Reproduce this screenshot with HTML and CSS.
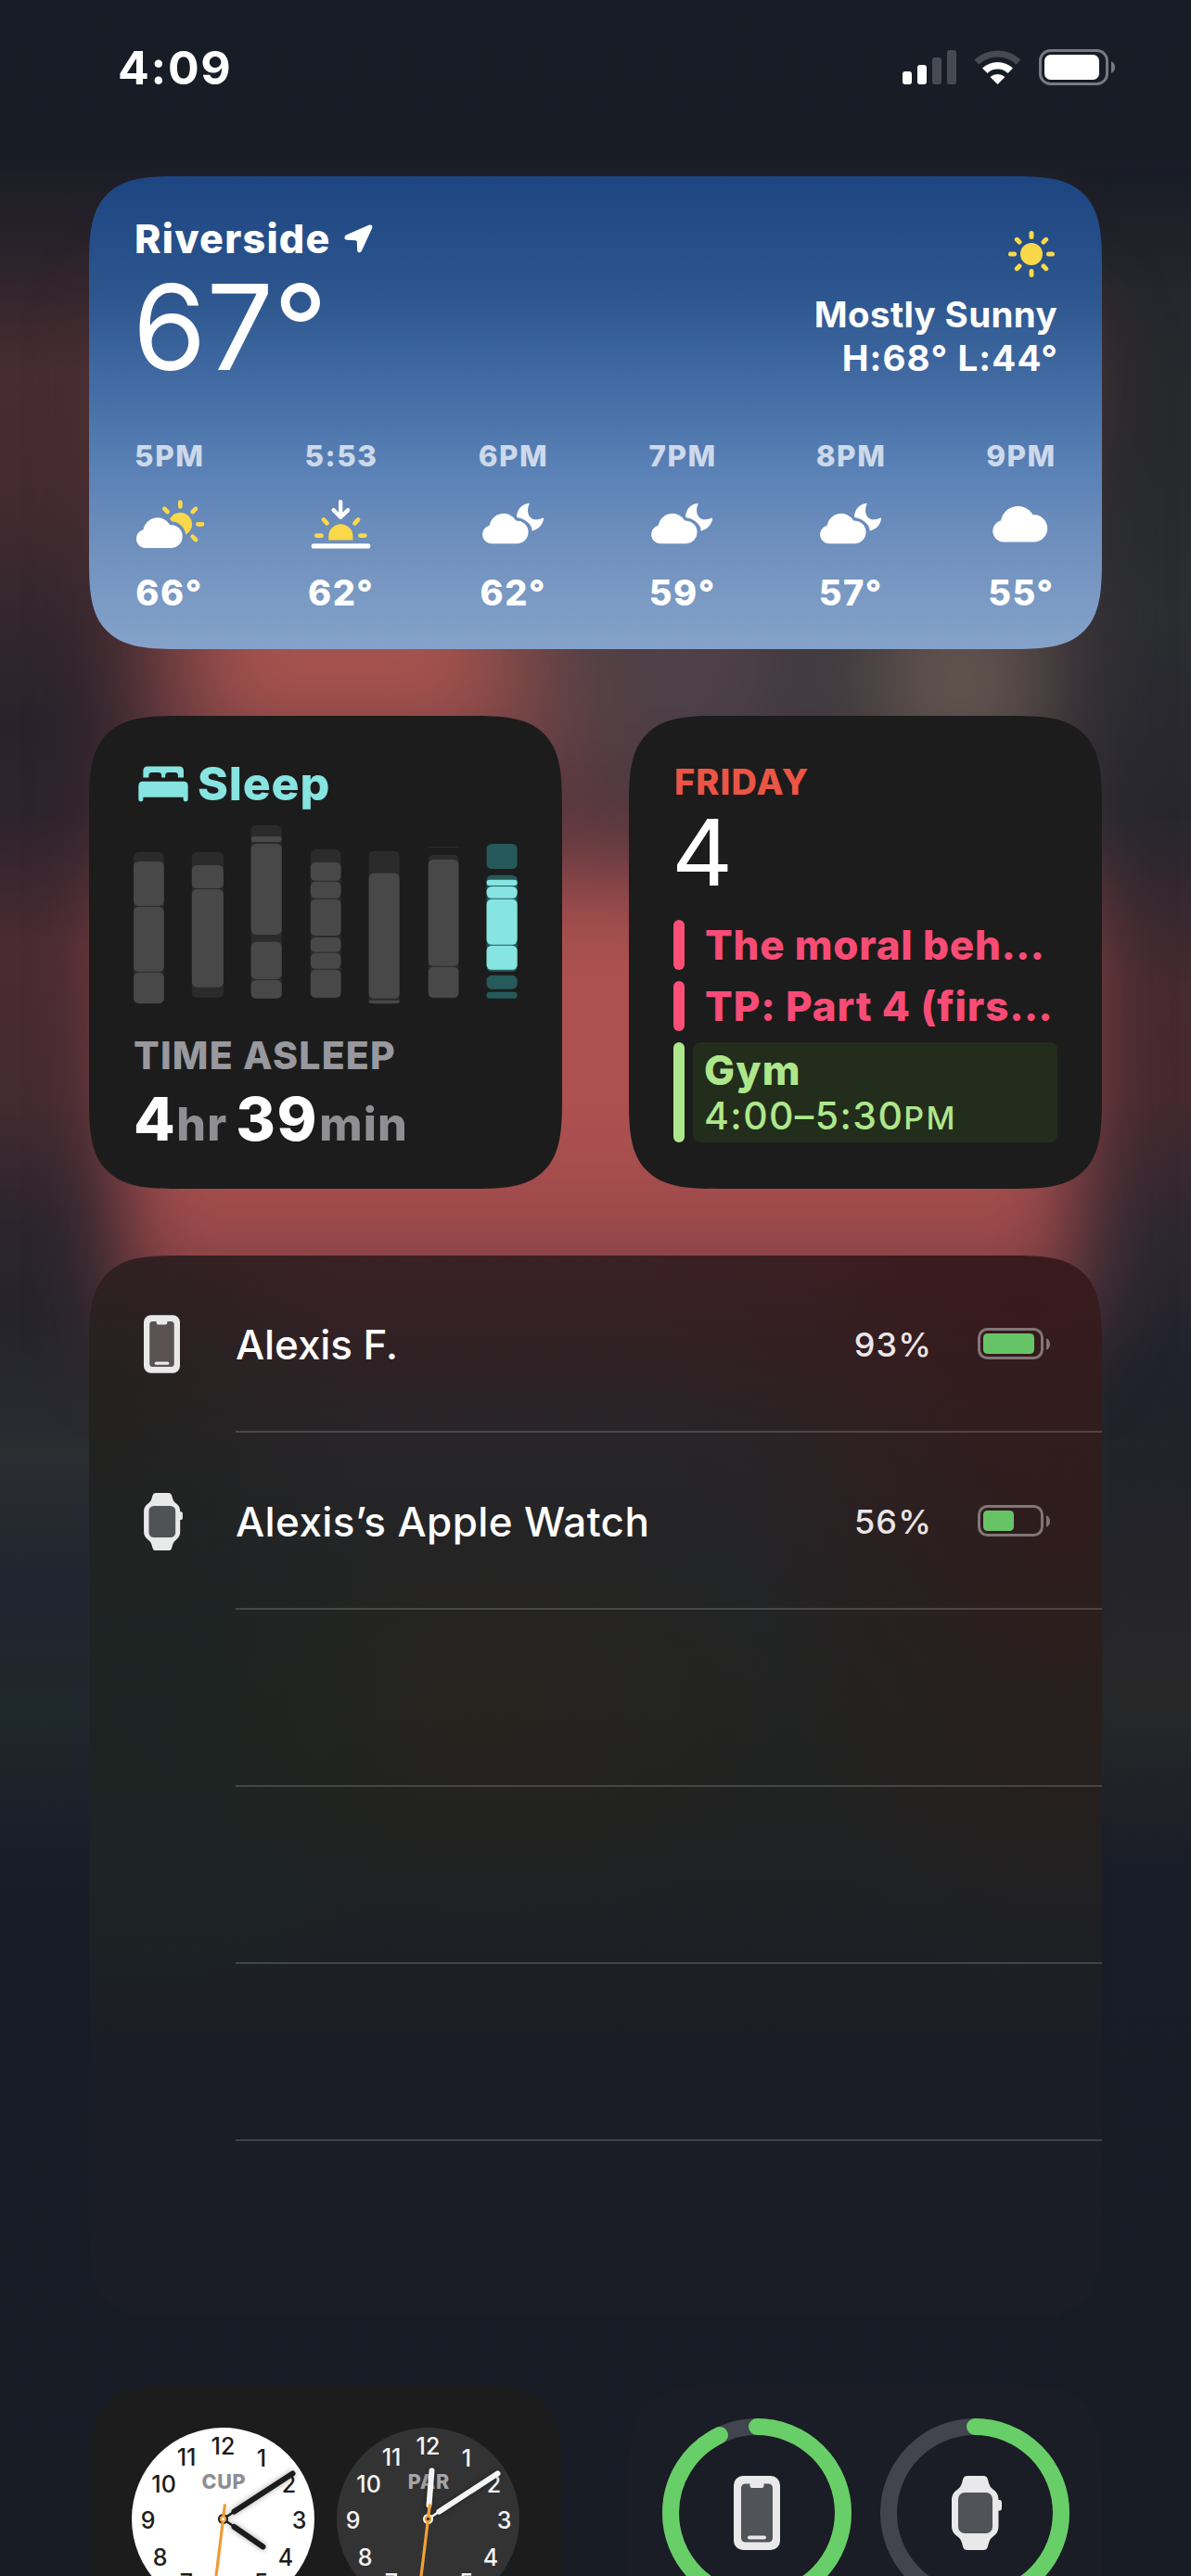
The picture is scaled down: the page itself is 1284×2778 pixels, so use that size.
FILE: index.html
```html
<!DOCTYPE html>
<html lang="en">
<head>
<meta charset="utf-8">
<meta name="viewport" content="width=device-width">
<title>Today View</title>
<link rel="stylesheet" href="styles.css">
</head>
<body>
<svg class="defs" width="0" height="0" aria-hidden="true">
  <defs>
    <path id="cloud" d="M51 390 A30 30 0 0 1 45 331 A47 47 0 0 1 132 315 A37.500 37.500 0 1 1 137 390 Z"/>
    <mask id="cloud-gap" maskUnits="userSpaceOnUse" x="0" y="220" width="260" height="190">
      <rect x="0" y="220" width="260" height="190" fill="#fff"/>
      <use href="#cloud" fill="#000" stroke="#000" stroke-width="22"/>
    </mask>
    <symbol id="partly-sunny" viewBox="20 232 225 160">
      <circle cx="165" cy="313" r="38" fill="#f9d84a" mask="url(#cloud-gap)"/>
      <g stroke="#f9d84a" stroke-width="14" stroke-linecap="round">
        <path d="M165 242V256M114 263L124 273M215 263L205 273M222 313H236M205 353L215 363"/>
      </g>
      <use href="#cloud" fill="#fff"/>
    </symbol>
    <symbol id="sunset" viewBox="586 232 196 162">
      <path d="M683 241V290M660 268L683 291L707 268" fill="none" stroke="#fff" stroke-width="13" stroke-linecap="round" stroke-linejoin="round"/>
      <path d="M644 366V353A39.500 39.500 0 0 1 723 353V366Z" fill="#f9d84a"/>
      <path d="M605 351H621M747 351H762M628 299L639 311M740 299L729 311" stroke="#f9d84a" stroke-width="14" stroke-linecap="round"/>
      <path d="M596 385H772" stroke="#fff" stroke-width="16" stroke-linecap="round"/>
    </symbol>
    <symbol id="cloud-moon" viewBox="1142 244 204 136">
      <use href="#cloud" x="1122" y="-12" fill="#fff"/>
      <path d="M1296 246C1275 248 1260 262 1256 287C1256 290 1257 292 1260 293C1275 296 1282 300 1290 307C1300 315 1306 324 1306 333C1306 336 1308 337 1311 335C1328 330 1340 318 1344 298C1345 294 1342 293 1339 295C1322 301 1308 300 1301 292C1290 280 1291 262 1297 249C1298 247 1298 246 1296 246Z" fill="#fff"/>
    </symbol>
    <symbol id="cloud-only" viewBox="20 287 156 104"><use href="#cloud" fill="#fff"/></symbol>
    <symbol id="phone" viewBox="0 0 50 80">
      <rect width="50" height="80" rx="10" fill="#e9e9e9"/>
      <rect x="8" y="8.500" width="34" height="63" rx="4.500" fill="currentColor"/>
      <path d="M17.500 7.500H32.500V10.500A2.500 2.500 0 0 1 30 13H20A2.500 2.500 0 0 1 17.500 10.500Z" fill="#e9e9e9"/>
      <rect x="15" y="64.500" width="20" height="4" rx="2" fill="#e9e9e9"/>
    </symbol>
    <symbol id="watch" viewBox="0 0 54 80">
      <path d="M17 0H34C37 0 38 1 39 4C40 8 41 12 44 14C48 17 50.500 20 50.500 26H52C53.500 26 54 27.500 54 29V34C54 36 53.500 37.500 52 37.500H50.500V54C50.500 60 48 63 44 66C41 68 40 72 39 76C38 79 37 80 34 80H17C14 80 13 79 12 76C11 72 10 68 7 66C3 63 0 60 0 54V26C0 20 3 17 7 14C10 12 11 8 12 4C13 1 14 0 17 0Z" fill="#e9e9e9"/>
      <rect x="7" y="18" width="37" height="44" rx="7" fill="currentColor"/>
    </symbol>
    <symbol id="dial" viewBox="-100 -100 200 200">
      <g font-family="Inter, sans-serif" font-size="25" font-weight="500" text-anchor="middle">
        <text x="0" y="-70">12</text><text x="41.500" y="-57">1</text><text x="71" y="-29">2</text>
        <text x="82" y="10">3</text><text x="67.500" y="50">4</text><text x="41" y="77">5</text>
        <text x="0" y="90">6</text><text x="-39.500" y="77">7</text><text x="-68" y="50">8</text>
        <text x="-81" y="10">9</text><text x="-64" y="-29">10</text><text x="-39.500" y="-58">11</text>
      </g>
    </symbol>
  </defs>
</svg>

<main class="screen">
  <header class="status">
    <time class="status-time">4:09</time>
    <svg class="status-icons" viewBox="0 0 147 40" width="147" height="40">
      <g fill="#fff"><rect x="0" y="24" width="10" height="14" rx="3"/><rect x="16" y="17" width="10" height="21" rx="3"/></g>
      <g fill="#474a53"><rect x="32" y="9" width="10" height="29" rx="3"/><rect x="48" y="1" width="10" height="37" rx="3"/></g>
      <path d="M77.500 11.500A36 36 0 0 1 127.500 11.500L122.500 16.500A29 29 0 0 0 82.500 16.500Z" fill="#474a53"/>
      <path d="M86 20.500A24 24 0 0 1 119 20.500L113.500 26A16 16 0 0 0 91.500 26Z" fill="#fff"/>
      <path d="M94.500 30A12 12 0 0 1 110.500 30L102.500 38Z" fill="#fff"/>
    </svg>
    <svg class="status-battery" viewBox="0 0 83 40" width="83" height="40">
      <rect x="1.500" y="1.500" width="72" height="36" rx="11" fill="none" stroke="#777a80" stroke-width="3"/>
      <rect x="6" y="6" width="59" height="27" rx="6.500" fill="#fff"/>
      <path d="M78 13Q82 15 82 19.500T78 26Z" fill="#777a80"/>
    </svg>
  </header>

  <section class="card weather">
    <div class="weather-now">
      <div>
        <div class="place">Riverside
          <svg viewBox="725 66 92 92" width="31" height="31"><path d="M804 68L734 99C724 104 723 115 734 116L761 117Q766 117 766 122L767 149C768 159 778 158 782 149L814 79C818 70 812 65 804 68Z" fill="#fff"/></svg>
        </div>
        <div class="temp">67°</div>
      </div>
      <div class="summary">
        <svg viewBox="-25 -25 50 50" width="50" height="50">
          <circle r="12" fill="#f9d84a"/>
          <path d="M0-22.500V-18.500M0 18.500V22.500M-22.500 0H-18.500M18.500 0H22.500M-15.700-15.700L-13-13M15.700-15.700L13-13M-15.700 15.700L-13 13M15.700 15.700L13 13" stroke="#f9d84a" stroke-width="5" stroke-linecap="round"/>
        </svg>
        <div class="condition">Mostly Sunny</div>
        <div class="range">H:68° L:44°</div>
      </div>
    </div>
    <div class="hours">
      <div class="hour"><span class="at">5PM</span><svg width="75" height="54"><use href="#partly-sunny"/></svg><span class="deg">66°</span></div>
      <div class="hour"><span class="at">5:53</span><svg width="65" height="54"><use href="#sunset"/></svg><span class="deg">62°</span></div>
      <div class="hour"><span class="at">6PM</span><svg class="low" width="68" height="45"><use href="#cloud-moon"/></svg><span class="deg">62°</span></div>
      <div class="hour"><span class="at">7PM</span><svg class="low" width="68" height="45"><use href="#cloud-moon"/></svg><span class="deg">59°</span></div>
      <div class="hour"><span class="at">8PM</span><svg class="low" width="68" height="45"><use href="#cloud-moon"/></svg><span class="deg">57°</span></div>
      <div class="hour"><span class="at">9PM</span><svg class="alone" width="62" height="41"><use href="#cloud-only"/></svg><span class="deg">55°</span></div>
    </div>
  </section>

  <div class="pair">
    <section class="card sleep">
      <div class="sleep-title">
        <svg viewBox="174 194 161 115" width="54" height="39" fill="#86e4e1">
          <path d="M190 231V209Q190 195 204 195H306Q320 195 320 209V231H302V224Q302 214 292 214H271Q261 214 261 224V231H249V224Q249 214 239 214H218Q208 214 208 224V231Z"/>
          <path d="M175 301V257Q175 243 189 243H320Q334 243 334 257V301Q334 308 327 308Q319 308 319 301V294H190V301Q190 308 182 308Q175 308 175 301Z"/>
        </svg>
        <span>Sleep</span>
      </div>
      <svg class="sleep-chart" viewBox="160 385 1226 571" width="414" height="193">
        <g fill="#2b2b2b">
          <rect x="160" y="470" width="97" height="485" rx="16"/><rect x="346" y="470" width="101" height="465" rx="16"/>
          <rect x="535" y="385" width="98" height="553" rx="16"/><rect x="725" y="462" width="97" height="475" rx="16"/>
          <rect x="911" y="467" width="98" height="489" rx="16"/><rect x="1101" y="479" width="97" height="459" rx="16"/>
          <rect x="1101" y="453" width="97" height="3"/>
        </g>
        <g fill="#484848">
          <rect x="160" y="500" width="97" height="142" rx="16"/><rect x="160" y="645" width="97" height="207" rx="16"/><rect x="160" y="855" width="97" height="98" rx="16"/>
          <rect x="346" y="512" width="101" height="74" rx="16"/><rect x="346" y="589" width="101" height="313" rx="16"/>
          <rect x="535" y="420" width="98" height="18" rx="9"/><rect x="535" y="444" width="98" height="290" rx="16"/><rect x="535" y="757" width="98" height="119" rx="16"/><rect x="535" y="879" width="98" height="59" rx="16"/>
          <rect x="725" y="503" width="97" height="59" rx="16"/><rect x="725" y="565" width="97" height="53" rx="16"/><rect x="725" y="621" width="97" height="116" rx="16"/><rect x="725" y="743" width="97" height="47" rx="16"/><rect x="725" y="793" width="97" height="50" rx="16"/><rect x="725" y="846" width="97" height="89" rx="16"/>
          <rect x="911" y="538" width="98" height="400" rx="16"/><rect x="911" y="944" width="98" height="9" rx="4"/>
          <rect x="1101" y="494" width="97" height="340" rx="16"/><rect x="1101" y="837" width="97" height="98" rx="16"/>
        </g>
        <g fill="#265959">
          <rect x="1287" y="444" width="98" height="80" rx="16"/><rect x="1287" y="544" width="98" height="308" rx="16"/><rect x="1287" y="864" width="98" height="44" rx="16"/><rect x="1287" y="917" width="98" height="21" rx="10"/>
        </g>
        <g fill="#86e4e1">
          <rect x="1287" y="559" width="98" height="18" rx="9"/><rect x="1287" y="580" width="98" height="38" rx="16"/><rect x="1287" y="621" width="98" height="145" rx="16"/><rect x="1287" y="769" width="98" height="77" rx="16"/>
        </g>
      </svg>
      <div class="sleep-label">TIME ASLEEP</div>
      <div class="sleep-value"><b>4</b><span class="hr">hr</span><b>39</b><span class="min">min</span></div>
    </section>

    <section class="card calendar">
      <div class="weekday">FRIDAY</div>
      <div class="day">4</div>
      <ul class="events">
        <li class="event"><span class="title">The moral beh…</span></li>
        <li class="event second"><span class="title">TP: Part 4 (firs…</span></li>
        <li class="event gym"><div class="gym-box"><div class="title">Gym</div><div class="when">4:00–5:30<small>PM</small></div></div></li>
      </ul>
    </section>
  </div>

  <section class="card batteries">
    <div class="device">
      <div class="device-icon phone"><svg width="39" height="63"><use href="#phone"/></svg></div>
      <div class="device-row"><span class="name short">Alexis F.</span><span class="pct">93%</span>
        <svg viewBox="0 0 78 36" width="78" height="36"><rect x="1.500" y="1.500" width="68" height="31" rx="9" fill="none" stroke="#827677" stroke-width="3"/><rect x="6" y="6" width="55" height="22" rx="4.500" fill="#67c466"/><path d="M74 11Q78 13 78 17.500T74 24Z" fill="#827677"/></svg>
      </div>
    </div>
    <div class="device">
      <div class="device-icon watch"><svg width="42" height="62"><use href="#watch"/></svg></div>
      <div class="device-row"><span class="name">Alexis’s Apple Watch</span><span class="pct">56%</span>
        <svg viewBox="0 0 78 36" width="78" height="36"><rect x="1.500" y="1.500" width="68" height="31" rx="9" fill="none" stroke="#827677" stroke-width="3"/><rect x="6" y="6" width="33" height="22" rx="4.500" fill="#67c466"/><path d="M74 11Q78 13 78 17.500T74 24Z" fill="#827677"/></svg>
      </div>
    </div>
    <div class="device"><div class="device-icon"></div><div class="device-row"></div></div>
    <div class="device"><div class="device-icon"></div><div class="device-row"></div></div>
    <div class="device"><div class="device-icon"></div><div class="device-row"></div></div>
  </section>

  <div class="pair">
    <section class="card clocks">
      <svg class="clock" viewBox="-98.500 -98.500 197 197" width="197" height="197">
        <circle r="98.500" fill="#fff"/>
        <text class="city" x=".800" y="-33" fill="#8e8e93">CUP</text>
        <use href="#dial" x="-100" y="-100" width="200" height="200" fill="#1c1c1c"/>
        <g class="hands" stroke="#1c1c1c" stroke-linecap="round" fill="none">
          <path d="M0 0L75-49M0 0L43 30" stroke-width="2.500"/>
          <path d="M12-8L75-49M12 8.500L43 30" stroke-width="6"/>
        </g>
        <circle r="5.500" fill="#1c1c1c"/>
        <path d="M2-16L-14 115" stroke="#ef9b38" stroke-width="3.200"/>
        <circle r="2.700" fill="#fff" stroke="#ef9b38" stroke-width="2"/>
      </svg>
      <svg class="clock" viewBox="-98.500 -98.500 197 197" width="197" height="197">
        <circle r="98.500" fill="#333"/>
        <text class="city" x=".800" y="-33" fill="#a5a5a7">PAR</text>
        <use href="#dial" x="-100" y="-100" width="200" height="200" fill="#f5f5f7"/>
        <g class="hands" stroke="#f5f5f7" stroke-linecap="round" fill="none">
          <path d="M0 0L75-49M0 0L4-52" stroke-width="2.500"/>
          <path d="M12-8L75-49M1-15L4-52" stroke-width="6"/>
        </g>
        <circle r="5.500" fill="#f5f5f7"/>
        <path d="M2-16L-14 115" stroke="#efa135" stroke-width="3.200"/>
        <circle r="2.700" fill="#333" stroke="#efa135" stroke-width="2"/>
      </svg>
    </section>
    <section class="card rings">
      <svg viewBox="-102 -102 204 204" width="204" height="204">
        <circle r="93" fill="none" stroke="#42444e" stroke-width="18"/>
        <circle r="93" fill="none" stroke="#68ce67" stroke-width="18" stroke-linecap="round" pathLength="100" stroke-dasharray="92.900 100" transform="rotate(-90)"/>
        <use href="#phone" x="-25" y="-40" width="50" height="80"/>
      </svg>
      <svg viewBox="-102 -102 204 204" width="204" height="204">
        <circle r="93" fill="none" stroke="#42444e" stroke-width="18"/>
        <circle r="93" fill="none" stroke="#68ce67" stroke-width="18" stroke-linecap="round" pathLength="100" stroke-dasharray="56 100" transform="rotate(-90)"/>
        <use href="#watch" x="-25" y="-40" width="54" height="80"/>
      </svg>
    </section>
  </div>
</main>
</body>
</html>
```
FILE: styles.css
```css
* { box-sizing: border-box; margin: 0; padding: 0; }
html, body { height: 2778px; overflow: hidden; }
body { background: #171b25; font-family: Inter, "Noto Sans", sans-serif; color: #fff; }
.defs { position: absolute; }
svg { display: block; flex: none; }

.screen {
  position: relative;
  isolation: isolate;
  width: 1284px;
  height: 2778px;
  overflow: hidden;
  padding: 0 96px;
  background: linear-gradient(180deg, #181c26 0, #181c25 160px, #2c232b 280px, #472c31 400px, #452b31 520px, #33272d 660px, #2a222b 780px, #2d232c 880px, #4a2b32 1020px, #442b31 1180px, #2c242d 1320px, #25232c 1420px, #2b2d31 1570px, #20252f 1700px, #1f282c 1850px, #191d28 2000px, #171b25 2200px, #171c25 2778px);
}
/* blurred wallpaper behind the widgets */
.screen::before {
  content: "";
  position: absolute;
  z-index: -1;
  left: 130px; right: 120px; top: 330px; height: 1130px;
  filter: blur(44px);
  background:
    linear-gradient(90deg, #4a2f35, transparent 130px) 0 0 / 100% 520px no-repeat,
    radial-gradient(ellipse 140px 150px at 905px 400px, #6a5a52 20%, transparent),
    radial-gradient(ellipse 190px 200px at 610px 380px, #56454c, transparent),
    radial-gradient(ellipse 500px 320px at 850px 350px, #38353a 62%, transparent 100%),
    linear-gradient(180deg, #5a3436 0, #8a4847 200px, #ab544f 360px, #a5524e 430px, #6a3a40 500px, #50323a 560px, #804245 610px, #ad5150 670px, #ad5150 870px, #a44c4d 960px, #904648 1030px, #5a3339 1130px);
}
.screen::after {
  content: "";
  position: absolute;
  z-index: -2;
  left: 1140px; right: 0; top: 180px; bottom: 0;
  background: linear-gradient(180deg, #181c26 0, #25272c 140px, #28292d 300px, #2c2d31 480px, #27262e 700px, #452a30 880px, #45292f 1000px, #2d2730 1150px, #20222c 1300px, #242429 1480px, #282829 1650px, #191d27 1840px, #171c25 2400px);
  -webkit-mask-image: linear-gradient(90deg, transparent, #000 60px);
  mask-image: linear-gradient(90deg, transparent, #000 60px);
}

.status { height: 190px; display: flex; padding: 48px 0 0 31px; }
.status-time { font-size: 50px; line-height: 50px; font-weight: 700; letter-spacing: 1.7px; }
.status-icons { margin: 5px 0 0 auto; }
.status-battery { margin: 5px -15px 0 0; }

.card { border-radius: 67px; overflow: hidden; }
@supports (corner-shape: squircle) {
  .card { border-radius: 100px; corner-shape: superellipse(1.68); }
}
.pair { display: grid; grid-template-columns: 510px 510px; gap: 72px; margin-top: 72px; }
.pair .card { height: 510px; }

.weather { height: 510px; padding: 45px 48px 0; background: linear-gradient(180deg, #1d4581 0, #2d568f 25%, #446ea5 46%, #5880b5 61%, #6f90bd 78%, #85a3ca 100%); }
.weather-now { display: flex; justify-content: space-between; height: 169px; }
.place { display: flex; align-items: center; gap: 14px; margin-left: 1px; font-size: 43px; line-height: 44px; font-weight: 800; letter-spacing: 1.25px; }
.temp { margin: 24px 0 0 -1px; font-size: 128px; line-height: 100px; font-weight: 400; }
.summary { display: flex; flex-direction: column; align-items: flex-end; padding-top: 14px; }
.summary svg { margin-right: 3px; }
.condition, .range { font-size: 38.500px; line-height: 47px; font-weight: 700; letter-spacing: .35px; white-space: nowrap; }
.condition { margin-top: 17px; }
.range { letter-spacing: 1.1px; margin-right: -1px; }
.hours { display: flex; margin-top: 72px; }
.hour { display: flex; flex-direction: column; align-items: center; width: 76px; flex: none; }
.hour:nth-child(2) { margin-left: 109.200px; }
.hour:nth-child(3) { margin-left: 109.600px; }
.hour:nth-child(4) { margin-left: 106.500px; }
.hour:nth-child(5) { margin-left: 105.500px; }
.hour:nth-child(6) { margin-left: 107.500px; }
.hour:first-child svg { margin-left: 3px; }
.at { font-size: 31.500px; line-height: 32px; height: 32px; font-weight: 800; letter-spacing: 1.5px; margin-right: -1.500px; color: #cdd9ea; }
.hour svg { margin: 30px 0 28px; }
.hour svg.low { margin: 34px 0 33px; }
.hour svg.alone { margin: 36px 0 35px; }
.deg { font-size: 38px; line-height: 38px; font-weight: 800; letter-spacing: 1.5px; margin-right: -1px; }

.sleep, .calendar, .clocks { background: #1c1c1c; }
.sleep { padding: 48px 48px 0; }
.sleep-title { display: flex; align-items: flex-start; height: 50px; font-size: 50px; line-height: 50px; font-weight: 800; letter-spacing: .8px; color: #86e4e1; }
.sleep-title svg { margin: 6px 10px 0 5px; }
.sleep-chart { margin-top: 20px; }
.sleep-label { margin-top: 35px; font-size: 41px; line-height: 41px; font-weight: 800; letter-spacing: 1.2px; color: #98989f; }
.sleep-value { display: flex; align-items: baseline; height: 65px; margin-top: 15px; line-height: 65px; }
.sleep-value b { font-size: 65px; font-weight: 800; letter-spacing: 1.6px; }
.sleep-value span { font-size: 50px; font-weight: 800; color: #8e8e93; letter-spacing: 1.1px; }
.sleep-value .hr { margin-right: 9px; }
.sleep-value .min { margin-left: 1px; }

.calendar { padding: 52px 48px 0; }
.weekday { margin-left: 1px; font-size: 38px; line-height: 38px; font-weight: 800; letter-spacing: 1.1px; color: #eb5545; }
.day { width: 80px; margin: 17px 0 0 -2px; font-size: 98.600px; line-height: 80px; font-weight: 400; transform: scaleX(1.04); transform-origin: left; }
.events { list-style: none; margin-top: 33px; display: grid; gap: 12px; }
.event { display: flex; height: 54px; white-space: nowrap; color: #f84c76; }
.event::before { content: ""; width: 12px; border-radius: 6px; background: #ff4f78; }
.title { margin-left: 22px; font-size: 44px; line-height: 54px; font-weight: 800; letter-spacing: .75px; }
.second .title { letter-spacing: .85px; }
.gym { height: 108px; color: #aee78b; }
.gym::before { background: #aee78b; }
.gym-box { width: 393px; margin-left: 9px; padding: 3px 0 0 12px; border-radius: 8px; background: #232d1c; }
.gym .title { margin: 0; letter-spacing: 1.2px; }
.when { font-size: 41px; line-height: 44px; font-weight: 500; letter-spacing: 1.4px; }
.when small { font-size: 34px; letter-spacing: 2.4px; }

.batteries {
  height: 1146px;
  margin-top: 72px;
  background:
    radial-gradient(ellipse 420px 420px at 1010px 60px, rgba(60, 22, 25, .45), transparent),
    radial-gradient(ellipse 340px 520px at 1060px 300px, rgba(52, 24, 20, .5), transparent),
    radial-gradient(ellipse 340px 240px at 430px 490px, rgba(42, 36, 27, .55), transparent),
    radial-gradient(ellipse 340px 330px at 60px 500px, rgba(27, 37, 35, .9), transparent),
    radial-gradient(ellipse 300px 400px at 0 200px, rgba(34, 33, 31, .8), transparent),
    linear-gradient(180deg, #3b2024 0, #302125 100px, #272528 200px, #232426 330px, #222423 480px, #202222 600px, #1c2025 760px, #1a1d25 850px, #1a1d25 1146px);
}
.device { display: flex; height: 191px; }
.device-icon { width: 158px; padding: 64px 0 0 59px; }
.device-icon.watch { padding-top: 65px; }
.phone { color: #5a5153; }
.watch { color: #505353; }
.device-row { flex: 1; display: flex; align-items: center; padding: 2px 56px 0 0; border-bottom: 2px solid rgba(255, 255, 255, .17); }
.name { font-size: 44px; font-weight: 500; letter-spacing: .4px; }
.name.short { letter-spacing: -.1px; }
.pct { margin: 0 49px 0 auto; font-size: 36px; font-weight: 500; letter-spacing: 1.1px; color: #ebe6e6; }

.clocks { display: flex; gap: 24px; padding: 46px 0 0 46px; }
.city { font: 800 21.500px Inter, sans-serif; letter-spacing: .7px; text-anchor: middle; }
.hands { filter: drop-shadow(0 0 3px rgba(0, 0, 0, .35)); }
.rings { display: flex; gap: 31px; padding: 36px 0 0 36px; background: #1a1d25; color: #505357; }
```
